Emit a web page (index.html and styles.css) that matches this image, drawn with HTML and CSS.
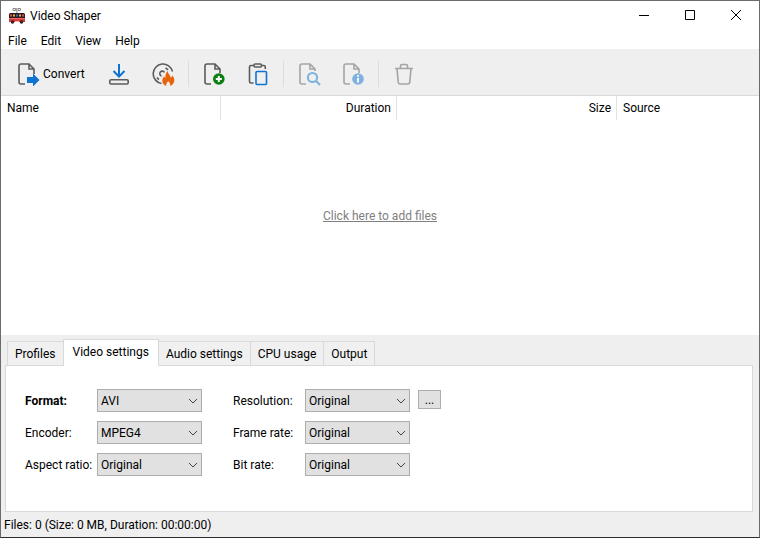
FILE: index.html
```html
<!DOCTYPE html>
<html lang="en">
  <head>
    <meta charset="utf-8" />
    <title>Video Shaper</title>
    <meta name="viewport" content="width=device-width, initial-scale=1" />
    <link rel="stylesheet" href="styles.css">
  </head>
  <body>
    <header class="titlebar">
      <svg class="app-icon" viewBox="0 0 18 18" aria-hidden="true">
        <path d="M5 1.500h2.500v2H5zM10 1.500h2.500v2H10zM8.800 1v5" fill="none" stroke="#888" />
        <path d="M2 6h14l1 2v7H1V8z" fill="#d23a3c" />
        <path d="M2 6h14l1 1.500v3.500H1V7.500z" fill="#2b1a22" />
        <path d="M2 7.500h2v2H2z" fill="#e8542e" />
        <path d="M5 7.500h2v2H5z" fill="#f0b030" />
        <path d="M8 7.500h2v2H8z" fill="#3f62c4" />
        <path d="M11 7.500h2v2h-2z" fill="#f0b030" />
        <path d="M14 7.500h2v2h-2z" fill="#d84a66" />
        <path d="M1 11h16v1H1z" fill="#ef6a62" />
        <circle cx="4.500" cy="15" r="1.800" fill="#3a2226" />
        <circle cx="13.500" cy="15" r="1.800" fill="#3a2226" />
        <path d="M7 14h4v1H7z" fill="#f3b7a8" />
      </svg>
      <h1>Video Shaper</h1>
      <div class="window-buttons">
        <button type="button" aria-label="Minimize">
          <svg viewBox="0 0 12 12"><path d="M1 5.500h10" /></svg>
        </button>
        <button type="button" aria-label="Maximize">
          <svg viewBox="0 0 12 12"><path d="M1.500 .5h9v9h-9z" /></svg>
        </button>
        <button type="button" aria-label="Close">
          <svg viewBox="0 0 12 12"><path d="M1 0l10 10M11 0L1 10" /></svg>
        </button>
      </div>
    </header>

    <nav class="menubar">
      <button type="button">File</button>
      <button type="button">Edit</button>
      <button type="button">View</button>
      <button type="button">Help</button>
    </nav>

    <div class="toolbar">
      <button type="button" class="tool convert">
        <svg class="icon" viewBox="0 0 24 24" aria-hidden="true">
          <path class="line" d="M9 22H5a2 2 0 0 1-2-2V4a2 2 0 0 1 2-2h8l5 5v5M13 2v5h5" />
          <path class="blue-fill" d="M11 15h6v-3.500l6.500 6.500-6.500 6.500V21h-6z" />
        </svg>
        <span>Convert</span>
      </button>
      <button type="button" class="tool" aria-label="Download">
        <svg class="icon" viewBox="0 0 24 24">
          <path class="blue-line" d="M12 2v12M6.500 9l5.500 5.500L17.500 9" />
          <rect class="line" x="2.800" y="17.800" width="18.400" height="4.200" rx="1.200" />
        </svg>
      </button>
      <button type="button" class="tool" aria-label="Burn disc">
        <svg class="icon" viewBox="0 0 24 24">
          <path class="line" d="M10.500 21.500A9.800 9.800 0 1 1 21.500 9.500" />
          <path class="line" d="M10.500 14A2.500 2.500 0 1 1 13.500 10.500M6 15.500a6.500 6.500 0 0 0 2 2M14.500 6a6.500 6.500 0 0 1 2.500 2" />
          <path class="flame" d="M16.500 9c.2 2.500 3 4 3.300 6.800.8-.5 1.200-1.500 1.200-2.500 2 1.700 2.700 4 2.200 6.200-.5 2.300-2 3.800-4 4.500.4-1.800-.3-3.300-2-4.700-1.400 1.400-2.300 2.900-1.900 4.700-2.500-.8-4-2.800-4-5.300 0-1.800.8-3.400 2-4.700 0 1 .4 1.800 1.100 2.200-.2-2.800.5-5.200 2.100-7.200z" />
        </svg>
      </button>
      <span class="separator"></span>
      <button type="button" class="tool" aria-label="Add files">
        <svg class="icon" viewBox="0 0 24 24">
          <path class="line" d="M9 22H5a2 2 0 0 1-2-2V4a2 2 0 0 1 2-2h8l5 5v4M13 2v5h5" />
          <circle class="green-fill" cx="16.800" cy="17" r="5.800" />
          <path class="mark" d="M16.800 14v6M13.800 17h6" />
        </svg>
      </button>
      <button type="button" class="tool" aria-label="Paste">
        <svg class="icon" viewBox="0 0 24 24">
          <path class="line" d="M7.500 21H5a1.500 1.500 0 0 1-1.500-1.500V5A1.500 1.500 0 0 1 5 3.500h3M15.500 3.500h2.300A1.500 1.500 0 0 1 19.300 5v2" />
          <rect class="line" x="8" y="2" width="7.500" height="3" rx="1.200" />
          <rect class="blue-line thin" x="10" y="9.500" width="10.500" height="13" rx="1" />
        </svg>
      </button>
      <span class="separator"></span>
      <button type="button" class="tool" aria-label="Preview" disabled>
        <svg class="icon" viewBox="0 0 24 24">
          <path class="line" d="M9 22H5a2 2 0 0 1-2-2V4a2 2 0 0 1 2-2h8l5 5v2M13 2v5h5" />
          <circle class="blue-line" cx="15.500" cy="15.500" r="4.600" />
          <path class="blue-line" d="M19 19l4 4" />
        </svg>
      </button>
      <button type="button" class="tool" aria-label="File information" disabled>
        <svg class="icon" viewBox="0 0 24 24">
          <path class="line" d="M9 22H5a2 2 0 0 1-2-2V4a2 2 0 0 1 2-2h8l5 5v4M13 2v5h5" />
          <circle class="blue-fill" cx="17" cy="17" r="5.800" />
          <path class="mark" d="M17 16v4.500M17 13v1.800" />
        </svg>
      </button>
      <span class="separator"></span>
      <button type="button" class="tool" aria-label="Delete" disabled>
        <svg class="icon" viewBox="0 0 24 24">
          <path class="line" d="M3 6.500h18M8.500 6V4a1.500 1.500 0 0 1 1.500-1.500h4A1.500 1.500 0 0 1 15.500 4v2M5 6.500l1.200 13.700A2 2 0 0 0 8.200 22h7.600a2 2 0 0 0 2-1.800L19 6.500" />
        </svg>
      </button>
    </div>

    <main class="file-list">
      <table class="files">
        <colgroup>
          <col class="col-name">
          <col class="col-duration">
          <col class="col-size">
          <col>
        </colgroup>
        <thead>
          <tr>
            <th scope="col">Name</th>
            <th scope="col" class="right">Duration</th>
            <th scope="col" class="right">Size</th>
            <th scope="col">Source</th>
          </tr>
        </thead>
      </table>
      <div class="empty">
        <a href="#">Click here to add files</a>
      </div>
    </main>

    <section class="settings">
      <div class="tabs" role="tablist">
        <button type="button" class="tab" role="tab" aria-selected="false">Profiles</button>
        <button type="button" class="tab active" role="tab" aria-selected="true" aria-controls="video-settings">Video settings</button>
        <button type="button" class="tab" role="tab" aria-selected="false">Audio settings</button>
        <button type="button" class="tab" role="tab" aria-selected="false">CPU usage</button>
        <button type="button" class="tab" role="tab" aria-selected="false">Output</button>
      </div>
      <div class="panel" id="video-settings" role="tabpanel">
        <div class="fields">
          <label class="required" for="format">Format:</label>
          <select id="format"><option>AVI</option></select>
          <label for="encoder">Encoder:</label>
          <select id="encoder"><option>MPEG4</option></select>
          <label for="aspect">Aspect ratio:</label>
          <select id="aspect"><option>Original</option></select>
        </div>
        <div class="fields">
          <label for="resolution">Resolution:</label>
          <select id="resolution"><option>Original</option></select>
          <label for="frame-rate">Frame rate:</label>
          <select id="frame-rate"><option>Original</option></select>
          <label for="bit-rate">Bit rate:</label>
          <select id="bit-rate"><option>Original</option></select>
        </div>
        <button type="button" class="more" aria-label="Custom resolution">...</button>
      </div>
    </section>

    <footer class="statusbar">Files: 0 (Size: 0 MB, Duration: 00:00:00)</footer>
  </body>
</html>
```

FILE: styles.css
```css
* {
  box-sizing: border-box;
}
body {
  display: flex;
  flex-direction: column;
  height: 100vh;
  margin: 0;
  border: 1px solid #6b6b6b;
  border-bottom-color: #2a2d31;
  font-family: Roboto, "Open Sans", sans-serif;
  font-size: 12px;
  line-height: 16px;
  background-color: #efefef;
  color: #000000;
}
button,
select {
  font: inherit;
  color: inherit;
}
button {
  padding: 0;
  border: none;
  background: none;
}
.titlebar {
  display: flex;
  align-items: center;
  height: 30px;
  padding-left: 7px;
  background-color: #ffffff;
}
.titlebar h1 {
  flex: 1;
  margin: 0 0 0 4px;
  font-size: 12px;
  font-weight: normal;
}
.app-icon {
  width: 18px;
  height: 18px;
}
.window-buttons {
  display: flex;
  height: 100%;
}
.window-buttons button {
  width: 46px;
}
.window-buttons svg {
  display: block;
  width: 12px;
  height: 12px;
  margin: 0 auto;
  fill: none;
  stroke: #000000;
}
.menubar {
  display: flex;
  height: 18px;
  padding-top: 2px;
  background-color: #ffffff;
}
.menubar button {
  padding: 0 7px;
}
.toolbar {
  display: flex;
  align-items: center;
  height: 47px;
  padding: 3px 5px 0;
  border-bottom: 1px solid #d9d9d9;
}
.tool {
  display: flex;
  align-items: center;
  gap: 3px;
  padding: 0 10px;
}
.convert {
  width: 91px;
}
.icon {
  width: 24px;
  height: 24px;
  fill: none;
  stroke-width: 2;
}
.tool:disabled .icon {
  opacity: 0.5;
}
.separator {
  width: 1px;
  height: 26px;
  margin: 0 3px;
  background-color: #dddddd;
}
.line {
  stroke: #5c5c5c;
  stroke-width: 1.6;
}
.blue-line {
  stroke: #0f74d1;
}
.thin {
  stroke-width: 1.6;
}
.blue-fill {
  fill: #0f74d1;
}
.green-fill {
  fill: #0b7f10;
}
.flame {
  fill: #e8640c;
}
.mark {
  stroke: #ffffff;
}
.file-list {
  display: flex;
  flex-direction: column;
  flex: 1;
  background-color: #ffffff;
}
.files {
  width: 100%;
  table-layout: fixed;
  border-spacing: 0;
}
.files th {
  height: 24px;
  padding: 0 5px 0 6px;
  border-right: 1px solid #e2e2e2;
  font-weight: normal;
  text-align: left;
}
.files th:last-child {
  border-right: none;
}
.files th.right {
  text-align: right;
}
.col-name,
.col-size {
  width: 220px;
}
.col-duration {
  width: 176px;
}
.empty {
  display: flex;
  flex: 1;
  align-items: center;
  justify-content: center;
  padding-bottom: 24px;
}
.empty a {
  color: #808080;
}
.settings {
  padding: 4px 6px 0 4px;
}
.tabs {
  display: flex;
  align-items: flex-end;
  padding-left: 2px;
}
.tab {
  height: 24px;
  padding: 0 7px;
  border: 1px solid #d9d9d9;
  border-bottom: none;
  border-left: none;
  background-color: #f0f0f0;
}
.tab:first-child {
  border-left: 1px solid #d9d9d9;
  border-right: none;
}
.tab.active {
  height: 27px;
  margin-bottom: -1px;
  padding: 0 9px 2px;
  border-left: 1px solid #d9d9d9;
  background-color: #ffffff;
}
.panel {
  display: flex;
  align-items: flex-start;
  min-height: 147px;
  padding: 23px 19px;
  border: 1px solid #d9d9d9;
  background-color: #ffffff;
}
.fields {
  display: grid;
  grid-template-columns: 72px 105px;
  row-gap: 9px;
  align-items: center;
}
.fields + .fields {
  margin-left: 31px;
}
.required {
  font-weight: bold;
}
select {
  height: 23px;
  padding: 0 20px 0 3px;
  border: 1px solid #adadad;
  border-radius: 0;
  appearance: none;
  background: #e1e1e1 url("data:image/svg+xml,%3Csvg xmlns='http://www.w3.org/2000/svg' width='10' height='6' fill='none' stroke='%23444'%3E%3Cpath d='M1 1l4 4 4-4'/%3E%3C/svg%3E") no-repeat right 3px center;
}
.more {
  width: 23px;
  height: 19px;
  margin: 1px 0 0 8px;
  border: 1px solid #adadad;
  background-color: #e1e1e1;
}
.statusbar {
  height: 25px;
  padding: 5px 3px 4px;
}
```
